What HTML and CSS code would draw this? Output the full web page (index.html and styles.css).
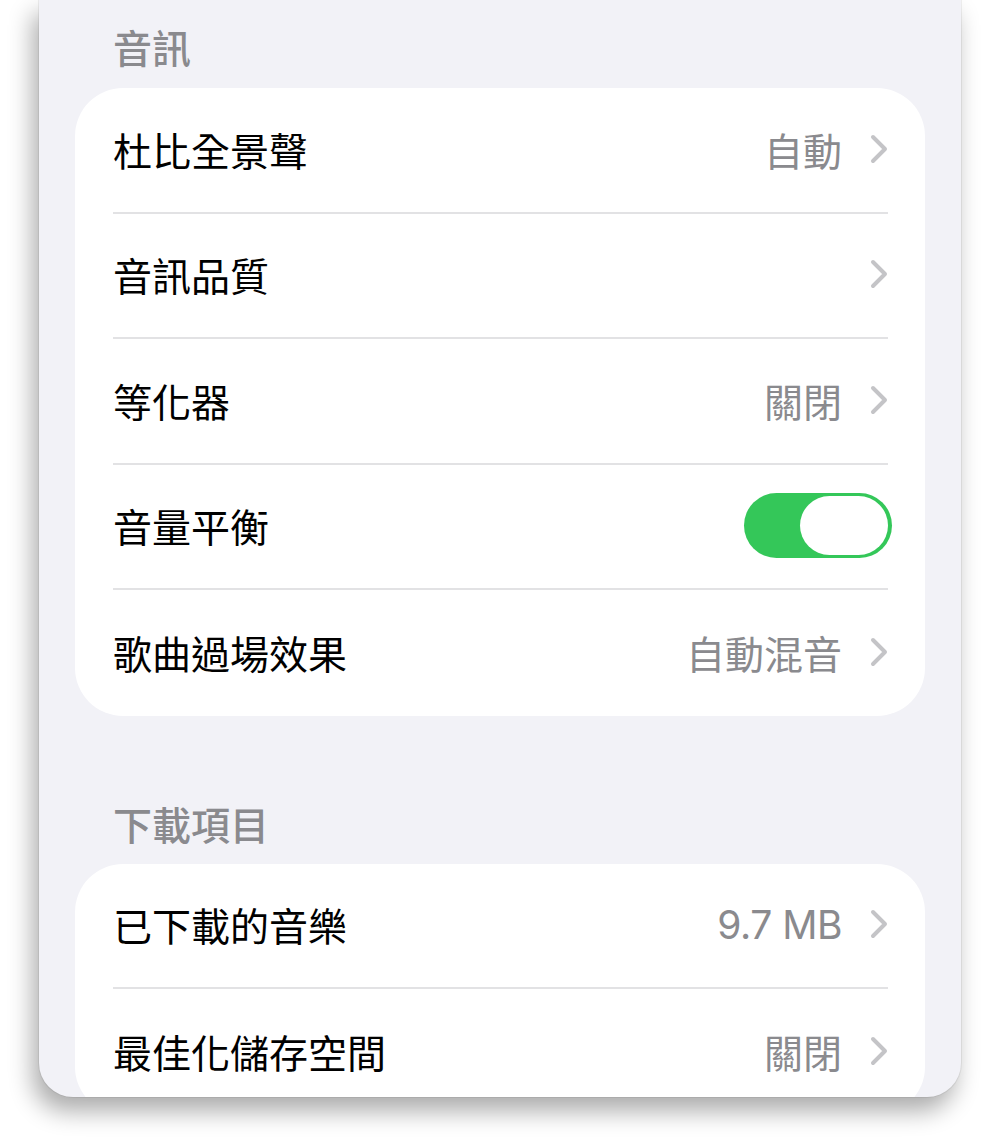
FILE: index.html
```html
<!DOCTYPE html>
<html lang="zh-Hant">
<head>
    <meta charset="UTF-8">
    <meta name="viewport" content="width=device-width, initial-scale=1.0">
    <title>音樂設定</title>
    <link rel="stylesheet" href="styles.css">
</head>
<body>

    <div class="phone">

        <!-- 音訊 -->
        <h2 class="section-title first">音訊</h2>
        <div class="card">
            <div class="row">
                <span class="label">杜比全景聲</span>
                <span class="value">自動</span>
                <svg class="chevron" viewBox="0 0 18 30"><path d="M3 3 L15 15 L3 27"/></svg>
            </div>
            <div class="row">
                <span class="label">音訊品質</span>
                <svg class="chevron" viewBox="0 0 18 30"><path d="M3 3 L15 15 L3 27"/></svg>
            </div>
            <div class="row">
                <span class="label">等化器</span>
                <span class="value">關閉</span>
                <svg class="chevron" viewBox="0 0 18 30"><path d="M3 3 L15 15 L3 27"/></svg>
            </div>
            <div class="row">
                <span class="label">音量平衡</span>
                <div class="toggle on"><div class="knob"></div></div>
            </div>
            <div class="row">
                <span class="label">歌曲過場效果</span>
                <span class="value">自動混音</span>
                <svg class="chevron" viewBox="0 0 18 30"><path d="M3 3 L15 15 L3 27"/></svg>
            </div>
        </div>

        <!-- 下載項目 -->
        <h2 class="section-title">下載項目</h2>
        <div class="card">
            <div class="row">
                <span class="label">已下載的音樂</span>
                <span class="value latin">9.7 MB</span>
                <svg class="chevron" viewBox="0 0 18 30"><path d="M3 3 L15 15 L3 27"/></svg>
            </div>
            <div class="row">
                <span class="label">最佳化儲存空間</span>
                <span class="value">關閉</span>
                <svg class="chevron" viewBox="0 0 18 30"><path d="M3 3 L15 15 L3 27"/></svg>
            </div>
        </div>

    </div>

</body>
</html>
```

FILE: styles.css
```css
html, body {
    margin: 0;
    padding: 0;
    height: 1138px;
    overflow: hidden;
    background-color: #ffffff;
}
body {
    font-family: "Inter", "Noto Sans CJK TC", sans-serif;
}
.phone {
    margin-left: 39px;
    width: 922px;
    height: 1097px;
    overflow: hidden;
    box-sizing: border-box;
    padding: 0 36px;
    background-color: #f2f2f7;
    border-radius: 0 0 34px 34px;
    box-shadow: -6px 14px 24px rgba(0, 0, 0, 0.33), 0 0 0 1px rgba(0, 0, 0, 0.06);
}
.section-title {
    margin: 0;
    padding: 89px 38px 17px;
    font-size: 39px;
    line-height: 42px;
    font-weight: 500;
    color: #8a8a8e;
}
.section-title.first {
    padding-top: 28px;
    padding-bottom: 18px;
}
.card {
    background-color: #ffffff;
    border-radius: 48px;
    padding: 0 37px 0 38px;
}
.row {
    display: flex;
    align-items: center;
    height: 125.5px;
    box-sizing: border-box;
    padding-bottom: 2px;
    border-bottom: 2px solid #e2e2e4;
}
.row:last-child {
    border-bottom: none;
}
.label {
    flex: 1;
    font-size: 39px;
    color: #000000;
}
.value {
    font-size: 39px;
    color: #8a8a8e;
    margin-right: 28px;
}
.value.latin {
    letter-spacing: -0.5px;
}
.chevron {
    width: 18px;
    height: 30px;
    fill: none;
    stroke: #c4c4c7;
    stroke-width: 4;
    stroke-linecap: round;
    stroke-linejoin: round;
}
.toggle {
    position: relative;
    width: 148px;
    height: 65px;
    margin-right: -4px;
    border-radius: 33px;
    background-color: #e9e9eb;
}
.toggle.on {
    background-color: #34c759;
}
.toggle .knob {
    position: absolute;
    top: 3px;
    right: 4px;
    width: 88px;
    height: 59px;
    border-radius: 30px;
    background-color: #ffffff;
}
```
